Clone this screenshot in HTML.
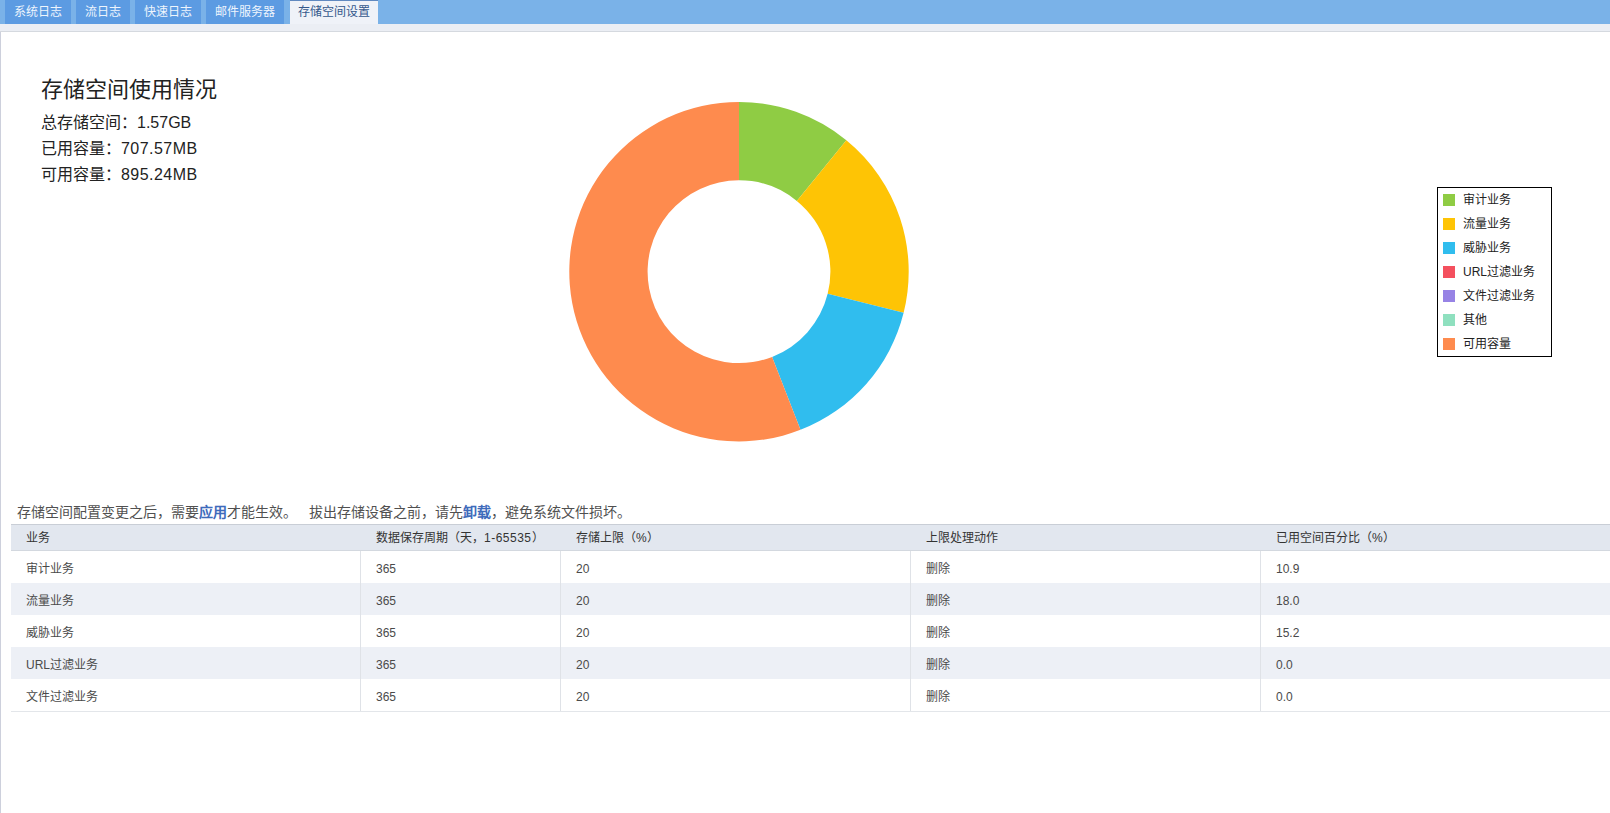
<!DOCTYPE html>
<html lang="zh-CN"><head><meta charset="utf-8">
<style>
*{margin:0;padding:0;box-sizing:border-box}
html,body{width:1610px;height:813px;overflow:hidden;background:#fff;font-family:"Liberation Sans",sans-serif}
#tabs{position:absolute;left:0;top:0;width:1610px;height:24px;background:#7ab2e8}
.tab{position:absolute;top:0;height:24px;background:#5c9be2;color:#eef5fd;font-size:12px;line-height:24px;text-align:center;white-space:nowrap}
.tab.on{background:#eff2f8;color:#34588c;border-top:1px solid #6089c0;line-height:22px}
#strip{position:absolute;left:0;top:24px;width:1610px;height:8px;background:#ebeef4;border-bottom:1px solid #d5d9df}
#content{position:absolute;left:0;top:32px;width:1610px;height:781px;background:#fff;border-left:1px solid #cdd0dc}
h1{position:absolute;left:41px;top:76px;font-size:22px;font-weight:normal;color:#222;line-height:28px;white-space:nowrap}
.info{position:absolute;left:41px;font-size:16px;color:#222;line-height:20px;white-space:nowrap}
svg{position:absolute;left:0;top:0}
#legend{position:absolute;left:1437px;top:187px;width:115px;height:170px;border:1px solid #000;background:#fff}
.li{position:absolute;left:0;height:24px;width:113px}
.sw{position:absolute;left:5px;top:6px;width:12px;height:12px}
.lt{position:absolute;left:25px;top:0;font-size:12px;line-height:24px;color:#222;white-space:nowrap}
#notice{position:absolute;left:17px;top:502px;font-size:14px;line-height:20px;color:#505050;white-space:nowrap}
#notice2{position:absolute;left:309px;top:502px;font-size:14px;line-height:20px;color:#505050;white-space:nowrap}
#notice b,#notice2 b{color:#3e6bbb}
.j{display:inline-block;text-align:justify;text-align-last:justify}
#tbl{position:absolute;left:11px;top:524px;width:1599px}
.hd{position:absolute;left:0;top:0;width:1599px;height:27px;background:#e2e7ef;border-top:1px solid #c9ced6;border-bottom:1px solid #d3d8df}
.row{position:absolute;left:0;width:1599px;height:32px}
.row.alt{background:#edf0f6}
.c{position:absolute;top:0;font-size:12px;white-space:nowrap}
.hd .c{line-height:25px;top:1px;color:#333}
.row .c{line-height:32px;top:2px;color:#4a4a4a}
.vl{position:absolute;top:27px;width:1px;height:160px;background:#dfe2e7}
.bl{position:absolute;left:0;top:187px;width:1599px;height:1px;background:#e3e6ea}
</style></head><body>
<div id="tabs">
<div class="tab" style="left:5px;width:66px"><span class="j" style="width:48px">系统日志</span></div>
<div class="tab" style="left:76px;width:54px"><span class="j" style="width:36px">流日志</span></div>
<div class="tab" style="left:135px;width:66px"><span class="j" style="width:48px">快速日志</span></div>
<div class="tab" style="left:206px;width:78px"><span class="j" style="width:60px">邮件服务器</span></div>
<div class="tab on" style="left:290px;width:88px"><span class="j" style="width:72px">存储空间设置</span></div>
</div>
<div id="strip"></div>
<div id="content"></div>
<h1><span class="j" style="width:176px">存储空间使用情况</span></h1>
<div class="info" style="top:113px"><span class="j" style="width:96px">总存储空间：</span><span style="letter-spacing:0px">1.57GB</span></div>
<div class="info" style="top:139px"><span class="j" style="width:80px">已用容量：</span><span style="letter-spacing:0.45px">707.57MB</span></div>
<div class="info" style="top:165px"><span class="j" style="width:80px">可用容量：</span><span style="letter-spacing:0.45px">895.24MB</span></div>
<svg width="1610" height="813" viewBox="0 0 1610 813">
<path fill="#8fcc44" d="M739.00 102.00A169.7 169.7 0 0 1 846.35 140.27L796.82 200.91A91.4 91.4 0 0 0 739.00 180.30Z"/>
<path fill="#fec405" d="M846.35 140.27A169.7 169.7 0 0 1 903.63 312.87L827.67 293.87A91.4 91.4 0 0 0 796.82 200.91Z"/>
<path fill="#30bdee" d="M903.63 312.87A169.7 169.7 0 0 1 800.48 429.87L772.11 356.89A91.4 91.4 0 0 0 827.67 293.87Z"/>
<path fill="#fe8b4e" d="M800.48 429.87A169.7 169.7 0 1 1 739.00 102.00L739.00 180.30A91.4 91.4 0 1 0 772.11 356.89Z"/>
</svg>
<div id="legend">
<div class="li" style="top:0px"><div class="sw" style="background:#8fcc44"></div><div class="lt"><span class="j" style="width:48px">审计业务</span></div></div>
<div class="li" style="top:24px"><div class="sw" style="background:#fec405"></div><div class="lt"><span class="j" style="width:48px">流量业务</span></div></div>
<div class="li" style="top:48px"><div class="sw" style="background:#30bdee"></div><div class="lt"><span class="j" style="width:48px">威胁业务</span></div></div>
<div class="li" style="top:72px"><div class="sw" style="background:#f4505e"></div><div class="lt">URL<span class="j" style="width:48px">过滤业务</span></div></div>
<div class="li" style="top:96px"><div class="sw" style="background:#9783e5"></div><div class="lt"><span class="j" style="width:72px">文件过滤业务</span></div></div>
<div class="li" style="top:120px"><div class="sw" style="background:#8fe0bf"></div><div class="lt"><span class="j" style="width:24px">其他</span></div></div>
<div class="li" style="top:144px"><div class="sw" style="background:#fe8b4e"></div><div class="lt"><span class="j" style="width:48px">可用容量</span></div></div>
</div>
<div id="notice"><span class="j" style="width:182px">存储空间配置变更之后，需要</span><b><span class="j" style="width:28px">应用</span></b><span class="j" style="width:70px">才能生效。</span></div>
<div id="notice2"><span class="j" style="width:154px">拔出存储设备之前，请先</span><b><span class="j" style="width:28px">卸载</span></b><span class="j" style="width:140px">，避免系统文件损坏。</span></div>
<div id="tbl">
<div class="hd"><div class="c" style="left:15px"><span class="j" style="width:24px">业务</span></div><div class="c" style="left:365px"><span class="j" style="width:108px">数据保存周期（天，</span><span style="letter-spacing:0.5px">1-65535</span><span class="j" style="width:12px">）</span></div><div class="c" style="left:565px"><span class="j" style="width:60px">存储上限（</span>%<span class="j" style="width:12px">）</span></div><div class="c" style="left:915px"><span class="j" style="width:72px">上限处理动作</span></div><div class="c" style="left:1265px"><span class="j" style="width:96px">已用空间百分比（</span>%<span class="j" style="width:12px">）</span></div></div>
<div class="row" style="top:27px"><div class="c" style="left:15px"><span class="j" style="width:48px">审计业务</span></div><div class="c" style="left:365px">365</div><div class="c" style="left:565px">20</div><div class="c" style="left:915px"><span class="j" style="width:24px">删除</span></div><div class="c" style="left:1265px">10.9</div></div>
<div class="row alt" style="top:59px"><div class="c" style="left:15px"><span class="j" style="width:48px">流量业务</span></div><div class="c" style="left:365px">365</div><div class="c" style="left:565px">20</div><div class="c" style="left:915px"><span class="j" style="width:24px">删除</span></div><div class="c" style="left:1265px">18.0</div></div>
<div class="row" style="top:91px"><div class="c" style="left:15px"><span class="j" style="width:48px">威胁业务</span></div><div class="c" style="left:365px">365</div><div class="c" style="left:565px">20</div><div class="c" style="left:915px"><span class="j" style="width:24px">删除</span></div><div class="c" style="left:1265px">15.2</div></div>
<div class="row alt" style="top:123px"><div class="c" style="left:15px">URL<span class="j" style="width:48px">过滤业务</span></div><div class="c" style="left:365px">365</div><div class="c" style="left:565px">20</div><div class="c" style="left:915px"><span class="j" style="width:24px">删除</span></div><div class="c" style="left:1265px">0.0</div></div>
<div class="row" style="top:155px"><div class="c" style="left:15px"><span class="j" style="width:72px">文件过滤业务</span></div><div class="c" style="left:365px">365</div><div class="c" style="left:565px">20</div><div class="c" style="left:915px"><span class="j" style="width:24px">删除</span></div><div class="c" style="left:1265px">0.0</div></div>
<div class="vl" style="left:349px"></div><div class="vl" style="left:549px"></div><div class="vl" style="left:899px"></div><div class="vl" style="left:1249px"></div>
<div class="bl"></div>
</div>
</body></html>
